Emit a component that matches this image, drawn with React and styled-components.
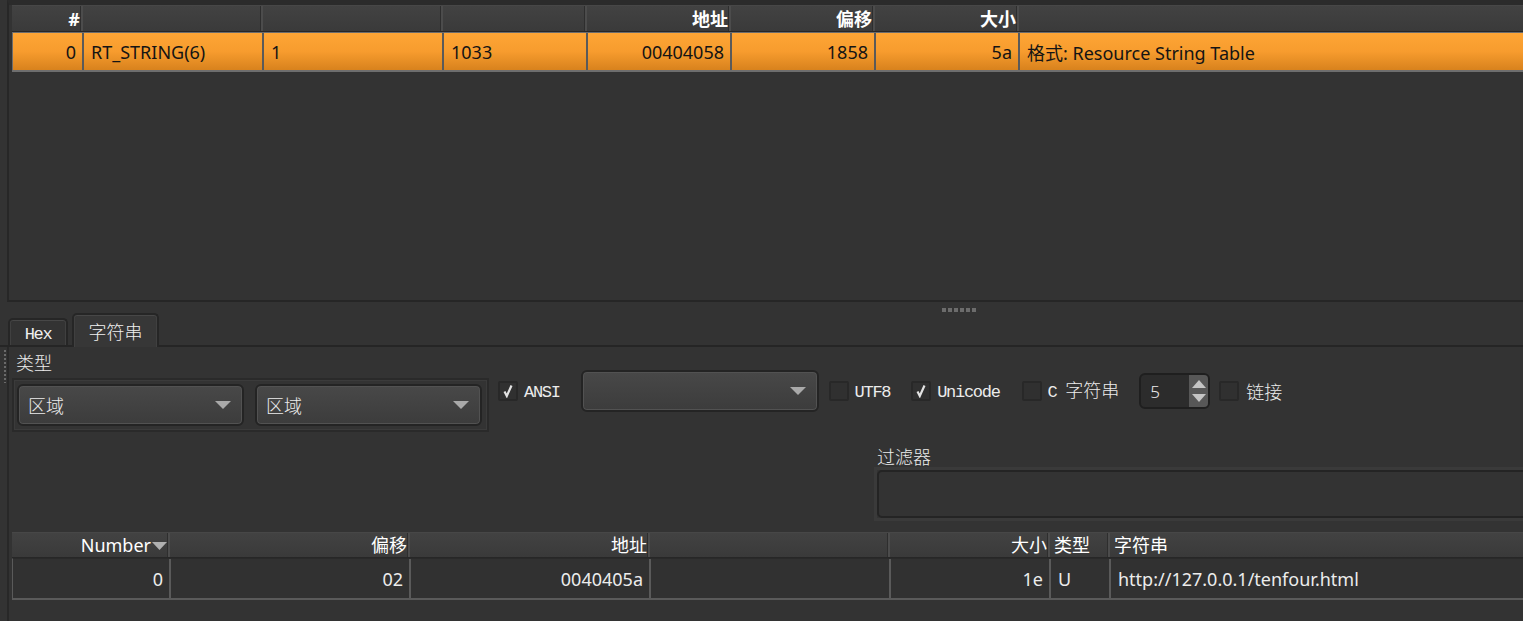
import React from "react";
import styled, { createGlobalStyle } from "styled-components";

const Global = createGlobalStyle`
  html, body { margin: 0; padding: 0; background: #333333; }
  body { font-family: "Noto Sans", "Noto Sans CJK SC", sans-serif; overflow: hidden; }
  * { box-sizing: border-box; }
`;

const Page = styled.div`
  width: 1523px;
  height: 621px;
  overflow: hidden;
  background: #333333;
  color: #e8e8e8;
  display: flex;
  flex-direction: column;
`;

/* ---------- top pane (resource table) ---------- */
const TopPane = styled.div`
  flex-shrink: 0;
  margin-left: 7px;
  height: 302px;
  border-top: 5px solid #2b2b2b;
  border-left: 2px solid #272727;
  border-bottom: 2px solid #262626;
  padding-left: 3px;
  background: #333333;
  overflow: hidden;
`;

const GridRow = styled.div`
  display: grid;
  grid-template-columns: ${(p) => p.$cols};
  width: ${(p) => p.$width || "1700px"};
`;

const HeaderRow = styled(GridRow)`
  height: ${(p) => p.$h || 26}px;
  background: linear-gradient(#424242, #3a3a3a);
  border-top: 1px solid #474747;
  border-bottom: 1px solid #272727;
`;

const HeaderCell = styled.div`
  display: flex;
  align-items: center;
  justify-content: ${(p) => (p.$right ? "flex-end" : "flex-start")};
  padding: 0 ${(p) => (p.$right ? "1px" : "4px")};
  border-right: 2px solid #4c4c4c;
  box-shadow: inset -1px 0 0 #2e2e2e;
  color: #ffffff;
  font-size: 18px;
  font-weight: ${(p) => (p.$bold ? 700 : 400)};
  line-height: 1;
  white-space: nowrap;
  &:last-child { border-right: none; box-shadow: none; }
`;

const OrangeRow = styled(GridRow)`
  height: 40px;
  background: linear-gradient(#fea535 0%, #f79c2e 50%, #d8821d 100%);
  border-top: 1px solid #6c6c6c;
  border-bottom: 2px solid #6e6e6e;
  border-left: 1px solid #6c6c6c;
`;

const DarkRow = styled(GridRow)`
  height: 42px;
  background: #313131;
  border-top: 1px solid #2a2a2a;
  border-bottom: 2px solid #5a5a5a;
  border-left: 1px solid #5a5a5a;
`;

const Cell = styled.div`
  display: flex;
  align-items: center;
  justify-content: ${(p) => (p.$right ? "flex-end" : "flex-start")};
  padding: 0 ${(p) => (p.$right ? "6px" : "7px")};
  border-right: 2px solid ${(p) => p.$line};
  color: ${(p) => p.$color};
  font-size: 18px;
  white-space: nowrap;
  overflow: hidden;
  &:last-child { border-right: none; }
`;

const SortArrow = styled.svg`
  margin-left: 1px;
  margin-top: 2px;
  flex-shrink: 0;
`;

/* ---------- splitter ---------- */
const Splitter = styled.div`
  flex-shrink: 0;
  height: 11px;
  display: flex;
  gap: 2px;
  padding: 6px 0 0 942px;
`;

const GripDot = styled.span`
  width: 4px;
  height: 4px;
  background: #6c6c6c;
`;

/* ---------- tabs ---------- */
const TabBar = styled.div`
  flex-shrink: 0;
  height: 34px;
  display: flex;
  align-items: flex-end;
  gap: 4px;
  padding-left: 8px;
  border-bottom: 2px solid #252525;
`;

const Tab = styled.div`
  width: ${(p) => p.$w}px;
  height: ${(p) => (p.$active ? 34 : 27)}px;
  margin-bottom: ${(p) => (p.$active ? -2 : 0)}px;
  display: flex;
  align-items: center;
  justify-content: center;
  background: ${(p) => (p.$active ? "#373737" : "#333333")};
  border: 2px solid #262626;
  border-bottom: none;
  border-radius: 5px 5px 0 0;
  box-shadow: inset 0 1px 0 #474747, inset 1px 0 0 #404040, inset -1px 0 0 #404040;
  color: #f0f0f0;
  font-family: ${(p) => (p.$cjk ? '"Noto Sans CJK SC", sans-serif' : '"Liberation Mono", monospace')};
  font-size: ${(p) => (p.$cjk ? 18 : 17)}px;
  letter-spacing: ${(p) => (p.$cjk ? 0 : -1.3)}px;
  font-weight: ${(p) => (p.$cjk ? 300 : 400)};
  padding-top: ${(p) => (p.$active ? 0 : 4)}px;
`;

/* ---------- panel ---------- */
const PanelWrap = styled.div`
  flex: 1;
  display: flex;
  min-height: 0;
`;

const GripColumn = styled.div`
  width: 7px;
  flex-shrink: 0;
  padding: 3px 0 0 4px;
`;

const DashGrip = styled.div`
  width: 2px;
  height: 33px;
  background: repeating-linear-gradient(#6a6a6a 0 2px, transparent 2px 4px);
`;

const Panel = styled.div`
  flex: 1;
  border-left: 2px solid #282828;
  padding-left: 3px;
  display: flex;
  flex-direction: column;
  min-width: 0;
`;

const TopSection = styled.div`
  display: flex;
  align-items: flex-start;
`;

const LeftCol = styled.div`
  width: 477px;
  flex-shrink: 0;
  display: flex;
  flex-direction: column;
`;

const FieldLabel = styled.div`
  height: 22px;
  line-height: 22px;
  margin-top: ${(p) => p.$top || 0}px;
  margin-left: ${(p) => p.$left || 0}px;
  font-family: "Noto Sans CJK SC", sans-serif;
  font-size: 18px;
  font-weight: 300;
  color: #ececec;
`;

const GroupBox = styled.div`
  margin-top: 5px;
  height: 54px;
  border: 2px solid #2a2a2a;
  box-shadow: inset 0 0 0 1px #3b3b3b;
  padding: 0 3px;
  display: flex;
  align-items: center;
  gap: 11px;
`;

const Combo = styled.div`
  width: ${(p) => p.$w}px;
  height: 42px;
  flex-shrink: 0;
  display: flex;
  align-items: center;
  justify-content: space-between;
  padding: 0 11px 0 9px;
  border: 2px solid #242424;
  border-radius: 6px;
  background: linear-gradient(#484848, #3c3c3c);
  box-shadow: inset 0 0 0 1px #525252;
  font-family: "Noto Sans CJK SC", sans-serif;
  font-size: 18px;
  font-weight: 300;
  color: #ececec;
`;

const RightCol = styled.div`
  margin-left: 9px;
  display: flex;
  flex-direction: column;
  flex: 1;
  min-width: 0;
`;

const ControlsRow = styled.div`
  margin-top: 23px;
  height: 42px;
  display: flex;
  align-items: center;
  white-space: nowrap;
`;

const CheckBox = styled.span`
  width: 20px;
  height: 20px;
  flex-shrink: 0;
  display: flex;
  align-items: center;
  justify-content: center;
  border: 2px solid #282828;
  border-radius: 2px;
  background: #303030;
  margin-left: ${(p) => p.$ml || 0}px;
`;

const OptLabel = styled.span`
  margin-left: ${(p) => p.$ml || 6}px;
  font-family: "Noto Sans CJK SC", sans-serif;
  font-size: 18px;
  font-weight: 300;
  color: #ececec;
  line-height: 22px;
`;

const Mono = styled.span`
  font-family: "Liberation Mono", monospace;
  font-size: 17px;
  letter-spacing: -1.3px;
  color: #ececec;
`;

const ControlCombo = styled(Combo)`
  margin-left: ${(p) => p.$ml}px;
`;

const Spin = styled.div`
  margin-left: 20px;
  width: 71px;
  height: 36px;
  flex-shrink: 0;
  display: flex;
  border: 2px solid #1f1f1f;
  border-radius: 6px;
  background: #2c2c2c;
  overflow: hidden;
`;

const SpinValue = styled.div`
  flex: 1;
  display: flex;
  align-items: center;
  padding-left: 9px;
  font-size: 17px;
  font-weight: 300;
  color: #ececec;
`;

const SpinButtons = styled.div`
  width: 19px;
  display: flex;
  flex-direction: column;
  align-items: center;
  justify-content: space-around;
  background: #575757;
  padding: 2px 0;
`;

const FilterBox = styled.div`
  margin-left: 376px;
  width: 720px;
  height: 54px;
  border: 3px solid #3a3a3a;
  padding: 0;
`;

const FilterInner = styled.div`
  height: 100%;
  border: 2px solid #242424;
  border-radius: 5px;
  background: #333333;
`;

const BottomTable = styled.div`
  margin-top: 11px;
  display: flex;
  flex-direction: column;
`;

/* ---------- small drawings ---------- */
const Check = () => (
  <svg width="12" height="14" viewBox="0 0 12 14">
    <path d="M2.5 7.5 L4.8 12 L9.5 1.5" fill="none" stroke="#e2e2e2" strokeWidth="2.2" strokeLinejoin="miter" />
  </svg>
);

const DownArrow = () => (
  <svg width="16" height="8" viewBox="0 0 16 8">
    <polygon points="0,0 16,0 8,8" fill="#a9a9a9" />
  </svg>
);

const TopCols = "71px 180px 180px 144px 144px 144px 144px 1fr";
const BottomCols = "158px 240px 240px 240px 160px 60px 1fr";

const topHeaders = [
  { t: "#", r: true },
  { t: "" },
  { t: "" },
  { t: "" },
  { t: "地址", r: true },
  { t: "偏移", r: true },
  { t: "大小", r: true },
  { t: "" },
];

const topRow = [
  { t: "0", r: true },
  { t: "RT_STRING(6)" },
  { t: "1" },
  { t: "1033" },
  { t: "00404058", r: true },
  { t: "1858", r: true },
  { t: "5a", r: true },
  { t: "格式: Resource String Table" },
];

const bottomHeaders = [
  { t: "Number", r: true, sort: true },
  { t: "偏移", r: true },
  { t: "地址", r: true },
  { t: "" },
  { t: "大小", r: true },
  { t: "类型" },
  { t: "字符串" },
];

const bottomRow = [
  { t: "0", r: true },
  { t: "02", r: true },
  { t: "0040405a", r: true },
  { t: "" },
  { t: "1e", r: true },
  { t: "U" },
  { t: "http://127.0.0.1/tenfour.html" },
];

export default function App() {
  return (
    <Page>
      <Global />
      <TopPane>
        <HeaderRow $cols={TopCols} $h={27}>
          {topHeaders.map((h, i) => (
            <HeaderCell key={i} $right={h.r} $bold>
              {h.t}
            </HeaderCell>
          ))}
        </HeaderRow>
        <OrangeRow $cols={TopCols}>
          {topRow.map((c, i) => (
            <Cell key={i} $right={c.r} $line="#5a5a5a" $color="#141414">
              {c.t}
            </Cell>
          ))}
        </OrangeRow>
      </TopPane>

      <Splitter>
        {[0, 1, 2, 3, 4, 5].map((i) => (
          <GripDot key={i} />
        ))}
      </Splitter>

      <TabBar>
        <Tab $w={60}>Hex</Tab>
        <Tab $w={87} $active $cjk>
          字符串
        </Tab>
      </TabBar>

      <PanelWrap>
        <GripColumn>
          <DashGrip />
        </GripColumn>
        <Panel>
          <TopSection>
            <LeftCol>
              <FieldLabel $top={4} $left={4}>
                类型
              </FieldLabel>
              <GroupBox>
                <Combo $w={227}>
                  <span>区域</span>
                  <DownArrow />
                </Combo>
                <Combo $w={227}>
                  <span>区域</span>
                  <DownArrow />
                </Combo>
              </GroupBox>
            </LeftCol>
            <RightCol>
              <ControlsRow>
                <CheckBox>
                  <Check />
                </CheckBox>
                <OptLabel>
                  <Mono>ANSI</Mono>
                </OptLabel>
                <ControlCombo $w={238} $ml={21}>
                  <span />
                  <DownArrow />
                </ControlCombo>
                <CheckBox $ml={10} />
                <OptLabel>
                  <Mono>UTF8</Mono>
                </OptLabel>
                <CheckBox $ml={21}>
                  <Check />
                </CheckBox>
                <OptLabel>
                  <Mono>Unicode</Mono>
                </OptLabel>
                <CheckBox $ml={22} />
                <OptLabel>
                  <Mono>C </Mono>字符串
                </OptLabel>
                <Spin>
                  <SpinValue>5</SpinValue>
                  <SpinButtons>
                    <svg width="14" height="8" viewBox="0 0 14 8">
                      <polygon points="7,0 14,8 0,8" fill="#c4c4c4" />
                    </svg>
                    <svg width="14" height="8" viewBox="0 0 14 8">
                      <polygon points="0,0 14,0 7,8" fill="#c4c4c4" />
                    </svg>
                  </SpinButtons>
                </Spin>
                <CheckBox $ml={9} />
                <OptLabel $ml={7}>链接</OptLabel>
              </ControlsRow>
              <FieldLabel $top={33} $left={379}>
                过滤器
              </FieldLabel>
              <FilterBox>
                <FilterInner />
              </FilterBox>
            </RightCol>
          </TopSection>

          <BottomTable>
            <HeaderRow $cols={BottomCols}>
              {bottomHeaders.map((h, i) => (
                <HeaderCell key={i} $right={h.r}>
                  {h.t}
                  {h.sort && (
                    <SortArrow width="15" height="8" viewBox="0 0 15 8">
                      <polygon points="0,0 15,0 7.5,8" fill="#b0b0b0" />
                    </SortArrow>
                  )}
                </HeaderCell>
              ))}
            </HeaderRow>
            <DarkRow $cols={BottomCols}>
              {bottomRow.map((c, i) => (
                <Cell key={i} $right={c.r} $line="#5a5a5a" $color="#ececec">
                  {c.t}
                </Cell>
              ))}
            </DarkRow>
          </BottomTable>
        </Panel>
      </PanelWrap>
    </Page>
  );
}
